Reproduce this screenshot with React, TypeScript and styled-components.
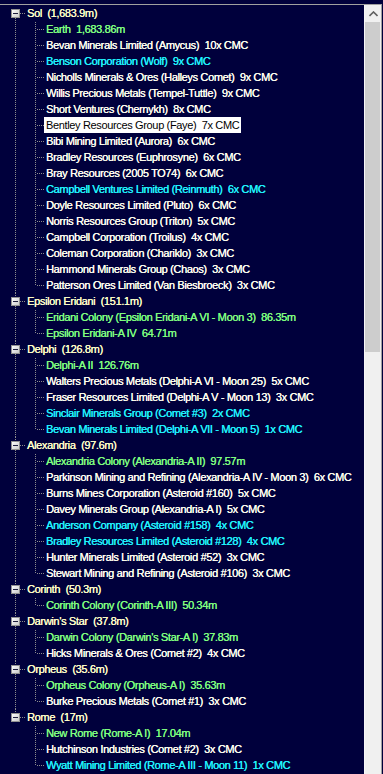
import styled, { createGlobalStyle } from "styled-components";

const GlobalStyle = createGlobalStyle`
  html, body {
    margin: 0;
    padding: 0;
    background: #00003c;
    overflow: hidden;
  }
`;

type Tone = "plain" | "green" | "cyan";

interface Child {
  text: string;
  tone: Tone;
  selected?: boolean;
}

interface Root {
  text: string;
  children: Child[];
}

const p = (text: string, selected = false): Child => ({ text, tone: "plain", selected });
const g = (text: string): Child => ({ text, tone: "green" });
const c = (text: string): Child => ({ text, tone: "cyan" });

const systems: Root[] = [
  {
    text: "Sol  (1,683.9m)",
    children: [
      g("Earth  1,683.86m"),
      p("Bevan Minerals Limited (Amycus)  10x CMC"),
      c("Benson Corporation (Wolf)  9x CMC"),
      p("Nicholls Minerals & Ores (Halleys Comet)  9x CMC"),
      p("Willis Precious Metals (Tempel-Tuttle)  9x CMC"),
      p("Short Ventures (Chernykh)  8x CMC"),
      p("Bentley Resources Group (Faye)  7x CMC", true),
      p("Bibi Mining Limited (Aurora)  6x CMC"),
      p("Bradley Resources (Euphrosyne)  6x CMC"),
      p("Bray Resources (2005 TO74)  6x CMC"),
      c("Campbell Ventures Limited (Reinmuth)  6x CMC"),
      p("Doyle Resources Limited (Pluto)  6x CMC"),
      p("Norris Resources Group (Triton)  5x CMC"),
      p("Campbell Corporation (Troilus)  4x CMC"),
      p("Coleman Corporation (Chariklo)  3x CMC"),
      p("Hammond Minerals Group (Chaos)  3x CMC"),
      p("Patterson Ores Limited (Van Biesbroeck)  3x CMC"),
    ],
  },
  {
    text: "Epsilon Eridani  (151.1m)",
    children: [
      g("Eridani Colony (Epsilon Eridani-A VI - Moon 3)  86.35m"),
      g("Epsilon Eridani-A IV  64.71m"),
    ],
  },
  {
    text: "Delphi  (126.8m)",
    children: [
      g("Delphi-A II  126.76m"),
      p("Walters Precious Metals (Delphi-A VI - Moon 25)  5x CMC"),
      p("Fraser Resources Limited (Delphi-A V - Moon 13)  3x CMC"),
      c("Sinclair Minerals Group (Comet #3)  2x CMC"),
      c("Bevan Minerals Limited (Delphi-A VII - Moon 5)  1x CMC"),
    ],
  },
  {
    text: "Alexandria  (97.6m)",
    children: [
      g("Alexandria Colony (Alexandria-A II)  97.57m"),
      p("Parkinson Mining and Refining (Alexandria-A IV - Moon 3)  6x CMC"),
      p("Burns Mines Corporation (Asteroid #160)  5x CMC"),
      p("Davey Minerals Group (Alexandria-A I)  5x CMC"),
      c("Anderson Company (Asteroid #158)  4x CMC"),
      c("Bradley Resources Limited (Asteroid #128)  4x CMC"),
      p("Hunter Minerals Limited (Asteroid #52)  3x CMC"),
      p("Stewart Mining and Refining (Asteroid #106)  3x CMC"),
    ],
  },
  {
    text: "Corinth  (50.3m)",
    children: [g("Corinth Colony (Corinth-A III)  50.34m")],
  },
  {
    text: "Darwin's Star  (37.8m)",
    children: [
      g("Darwin Colony (Darwin's Star-A I)  37.83m"),
      p("Hicks Minerals & Ores (Comet #2)  4x CMC"),
    ],
  },
  {
    text: "Orpheus  (35.6m)",
    children: [
      g("Orpheus Colony (Orpheus-A I)  35.63m"),
      p("Burke Precious Metals (Comet #1)  3x CMC"),
    ],
  },
  {
    text: "Rome  (17m)",
    children: [
      g("New Rome (Rome-A I)  17.04m"),
      p("Hutchinson Industries (Comet #2)  3x CMC"),
      c("Wyatt Mining Limited (Rome-A III - Moon 11)  1x CMC"),
    ],
  },
];

const toneColor: Record<Tone | "root", string> = {
  root: "#ffffc8",
  plain: "#fffff0",
  green: "#80ff80",
  cyan: "#20f4ff",
};

const Page = styled.div`
  padding-top: 4px;
  height: 770px;
`;

const Panel = styled.div`
  display: flex;
  width: 382px;
  height: 770px;
  border-top: 1px solid #a0a0a0;
  border-right: 1px solid #a0a0a0;
  background: #00003c;
  box-sizing: border-box;
`;

const TreeArea = styled.div`
  flex: 1;
  overflow: hidden;
  display: flex;
  flex-direction: column;
`;

const Row = styled.div`
  display: flex;
  align-items: stretch;
  height: 16px;
  flex-shrink: 0;
`;

const Label = styled.span<{ $tone: Tone | "root"; $selected?: boolean }>`
  padding: 0 2px;
  height: 16px;
  line-height: 16px;
  white-space: pre;
  font-family: "Liberation Sans", Arial, sans-serif;
  font-size: 11px;
  letter-spacing: -0.35px;
  color: ${({ $tone, $selected }) => ($selected ? "#000000" : toneColor[$tone])};
  background: ${({ $selected }) => ($selected ? "#ffffff" : "transparent")};
  text-shadow: ${({ $selected }) => ($selected ? "none" : "0.25px 0 0 currentColor")};
`;

const ScrollBar = styled.div`
  width: 17px;
  display: flex;
  flex-direction: column;
  background: #f0f0f0;
  border-left: 1px solid #f8f8f8;
  box-sizing: border-box;
`;

const ArrowButton = styled.div`
  height: 17px;
  display: flex;
  align-items: center;
  justify-content: center;
  flex-shrink: 0;
`;

const Thumb = styled.div`
  height: 330px;
  margin: 0 1px 0 0;
  background: #cdcdcd;
`;

const DOT = "#8c8c8c";

function VLine({ x, y1, y2 }: { x: number; y1: number; y2: number }) {
  return (
    <line
      x1={x + 0.5}
      y1={y1}
      x2={x + 0.5}
      y2={y2}
      stroke={DOT}
      strokeWidth={1}
      strokeDasharray="1 1"
    />
  );
}

function HLine({ x1, x2, y }: { x1: number; x2: number; y: number }) {
  return (
    <line
      x1={x1}
      y1={y + 0.5}
      x2={x2}
      y2={y + 0.5}
      stroke={DOT}
      strokeWidth={1}
      strokeDasharray="1 1"
    />
  );
}

function RootConnector({ first, last }: { first: boolean; last: boolean }) {
  return (
    <svg width={25} height={16} shapeRendering="crispEdges" style={{ flexShrink: 0 }}>
      {!first && <VLine x={15} y1={0} y2={4} />}
      {!last && <VLine x={15} y1={13} y2={16} />}
      <HLine x1={20} x2={25} y={8} />
      <rect x={11.5} y={4.5} width={8} height={8} fill="url(#boxfill)" stroke="#919191" />
      <line x1={13} y1={8.5} x2={18} y2={8.5} stroke="#1c1c3c" strokeWidth={1} />
    </svg>
  );
}

function ChildConnector({ rootLine, lastChild }: { rootLine: boolean; lastChild: boolean }) {
  return (
    <svg width={44} height={16} shapeRendering="crispEdges" style={{ flexShrink: 0 }}>
      {rootLine && <VLine x={15} y1={1} y2={16} />}
      <VLine x={35} y1={1} y2={lastChild ? 9 : 16} />
      <HLine x1={37} x2={44} y={8} />
    </svg>
  );
}

function TreeView() {
  return (
    <TreeArea>
      <svg width={0} height={0} style={{ position: "absolute" }}>
        <defs>
          <linearGradient id="boxfill" x1="0" y1="0" x2="1" y2="1">
            <stop offset="0" stopColor="#ffffff" />
            <stop offset="1" stopColor="#c8c8c8" />
          </linearGradient>
        </defs>
      </svg>
      {systems.map((sys, i) => {
        const lastRoot = i === systems.length - 1;
        return (
          <div key={sys.text}>
            <Row>
              <RootConnector first={i === 0} last={lastRoot} />
              <Label $tone="root">{sys.text}</Label>
            </Row>
            {sys.children.map((child, j) => (
              <Row key={child.text + j}>
                <ChildConnector rootLine={!lastRoot} lastChild={j === sys.children.length - 1} />
                <Label $tone={child.tone} $selected={child.selected}>
                  {child.text}
                </Label>
              </Row>
            ))}
          </div>
        );
      })}
    </TreeArea>
  );
}

export default function App() {
  return (
    <>
      <GlobalStyle />
      <Page>
        <Panel>
          <TreeView />
          <ScrollBar>
            <ArrowButton>
              <svg width={9} height={6} viewBox="0 0 9 6">
                <path d="M0.5 5 L4.5 1 L8.5 5" fill="none" stroke="#606060" strokeWidth={1.6} />
              </svg>
            </ArrowButton>
            <Thumb />
          </ScrollBar>
        </Panel>
      </Page>
    </>
  );
}
